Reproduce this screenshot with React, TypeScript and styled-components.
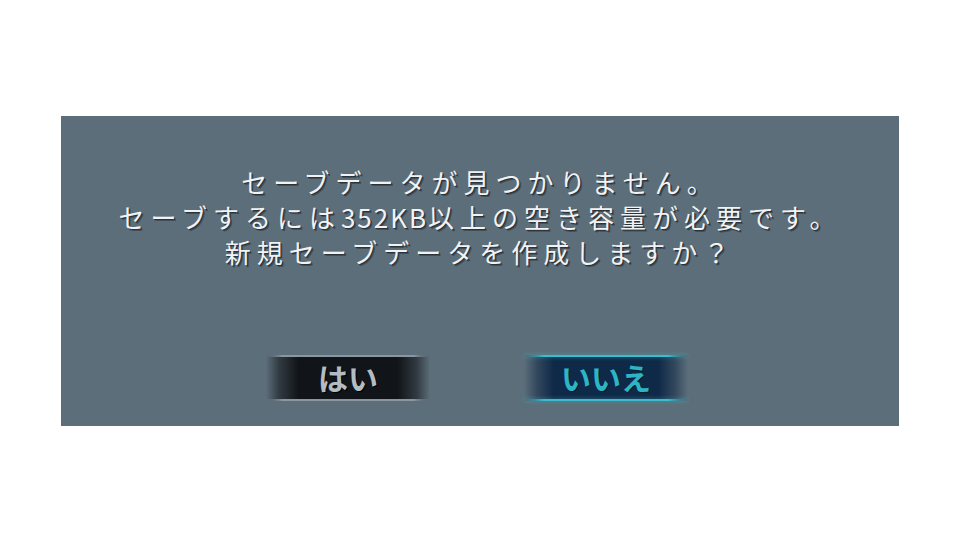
import React from "react";
import styled, { createGlobalStyle, css } from "styled-components";

const GlobalStyle = createGlobalStyle`
  html, body {
    margin: 0;
    padding: 0;
    background: #ffffff;
  }
  body {
    font-family: "Noto Sans CJK JP", "Noto Sans", sans-serif;
  }
`;

const Page = styled.div`
  width: 960px;
  height: 544px;
  display: flex;
  flex-direction: column;
  align-items: center;
  padding-top: 116px;
  box-sizing: border-box;
`;

const Panel = styled.div`
  width: 838px;
  height: 310px;
  box-sizing: border-box;
  background: #5c6e7a;
  display: flex;
  flex-direction: column;
  align-items: center;
  padding-top: 48px;
`;

const Message = styled.div`
  display: flex;
  flex-direction: column;
  align-items: center;
  color: #f2f2f2;
  font-family: "Noto Sans CJK JP", sans-serif;
  font-size: 26px;
  line-height: 35px;
  letter-spacing: 6px;
  text-shadow: 1px 1px 0 #28333c, 2px 2px 0 rgba(30, 40, 48, 0.45);
`;

const Line = styled.div`
  white-space: nowrap;
`;

const Narrow = styled.span`
  letter-spacing: 2px;
`;

const Buttons = styled.div`
  display: flex;
  gap: 94px;
  margin-top: 86px;
  margin-left: -6px;
`;

const Button = styled.div<{ $active?: boolean }>`
  position: relative;
  width: 164px;
  height: 46px;
  display: flex;
  align-items: center;
  justify-content: center;
  font-family: "Noto Sans CJK JP", sans-serif;
  font-weight: 700;
  font-size: 30px;
  line-height: 1;
  padding-bottom: 2px;
  box-sizing: border-box;

  ${({ $active }) =>
    $active
      ? css`
          color: #2db4c6;
          background: linear-gradient(
            to right,
            rgba(15, 40, 70, 0) 0%,
            rgba(15, 40, 70, 0.55) 8%,
            #0f2a48 18%,
            #0f2a48 82%,
            rgba(15, 40, 70, 0.55) 92%,
            rgba(15, 40, 70, 0) 100%
          );
          text-shadow: 1px 1px 0 #0a1a2c;
        `
      : css`
          color: #b3bcc0;
          background: linear-gradient(
            to right,
            rgba(14, 16, 20, 0) 0%,
            rgba(14, 16, 20, 0.55) 8%,
            #111418 20%,
            #111418 80%,
            rgba(14, 16, 20, 0.55) 92%,
            rgba(14, 16, 20, 0) 100%
          );
          text-shadow: 1px 1px 0 #000;
        `}

  &::before,
  &::after {
    content: "";
    position: absolute;
    left: 0;
    right: 0;
    height: 2px;
    background: ${({ $active }) =>
      $active
        ? "linear-gradient(to right, rgba(60,190,205,0) 0%, #3cbccc 12%, #3cbccc 88%, rgba(60,190,205,0) 100%)"
        : "linear-gradient(to right, rgba(140,154,162,0) 0%, #8a979e 10%, #8a979e 90%, rgba(140,154,162,0) 100%)"};
    box-shadow: ${({ $active }) =>
      $active ? "0 0 4px rgba(60, 190, 205, 0.6)" : "none"};
  }
  &::before {
    top: 0;
  }
  &::after {
    bottom: 0;
  }
`;

export default function App() {
  return (
    <>
      <GlobalStyle />
      <Page>
        <Panel>
          <Message>
            <Line>セーブデータが見つかりません。</Line>
            <Line>
              セーブするには<Narrow>352KB</Narrow>以上の空き容量が必要です。
            </Line>
            <Line>新規セーブデータを作成しますか？</Line>
          </Message>
          <Buttons>
            <Button>はい</Button>
            <Button $active>いいえ</Button>
          </Buttons>
        </Panel>
      </Page>
    </>
  );
}
